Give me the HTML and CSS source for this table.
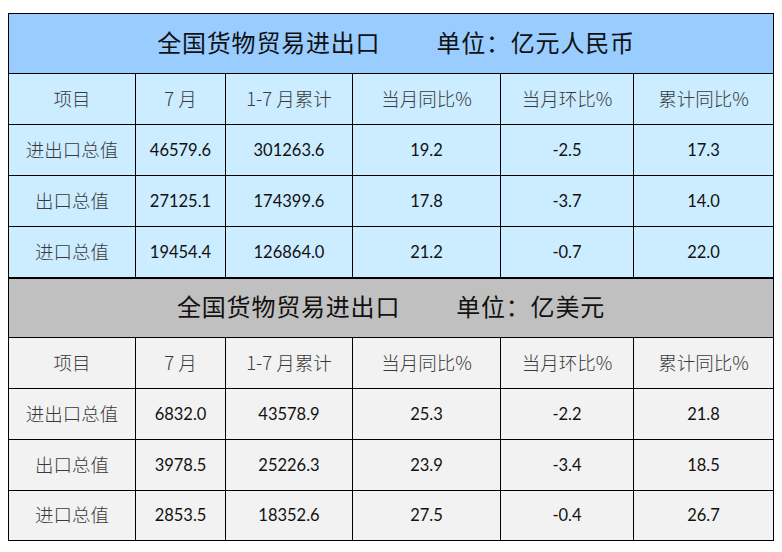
FILE: index.html
```html
<!DOCTYPE html>
<html lang="zh-CN">
<head>
<meta charset="utf-8">
<title>全国货物贸易进出口</title>
<link rel="stylesheet" href="styles.css">
</head>
<body>
<div class="sheet">
  <section class="block block-cny">
    <div class="title"><span>全国货物贸易进出口</span><span>单位：亿元人民币</span></div>
    <div class="cell hd">项目</div>
    <div class="cell hd">7 月</div>
    <div class="cell hd">1-7 月累计</div>
    <div class="cell hd">当月同比%</div>
    <div class="cell hd">当月环比%</div>
    <div class="cell hd">累计同比%</div>

    <div class="cell lbl">进出口总值</div>
    <div class="cell num">46579.6</div>
    <div class="cell num">301263.6</div>
    <div class="cell num">19.2</div>
    <div class="cell num">-2.5</div>
    <div class="cell num">17.3</div>

    <div class="cell lbl">出口总值</div>
    <div class="cell num">27125.1</div>
    <div class="cell num">174399.6</div>
    <div class="cell num">17.8</div>
    <div class="cell num">-3.7</div>
    <div class="cell num">14.0</div>

    <div class="cell lbl">进口总值</div>
    <div class="cell num">19454.4</div>
    <div class="cell num">126864.0</div>
    <div class="cell num">21.2</div>
    <div class="cell num">-0.7</div>
    <div class="cell num">22.0</div>
  </section>

  <section class="block block-usd">
    <div class="title"><span>全国货物贸易进出口</span><span>单位：亿美元</span></div>
    <div class="cell hd">项目</div>
    <div class="cell hd">7 月</div>
    <div class="cell hd">1-7 月累计</div>
    <div class="cell hd">当月同比%</div>
    <div class="cell hd">当月环比%</div>
    <div class="cell hd">累计同比%</div>

    <div class="cell lbl">进出口总值</div>
    <div class="cell num">6832.0</div>
    <div class="cell num">43578.9</div>
    <div class="cell num">25.3</div>
    <div class="cell num">-2.2</div>
    <div class="cell num">21.8</div>

    <div class="cell lbl">出口总值</div>
    <div class="cell num">3978.5</div>
    <div class="cell num">25226.3</div>
    <div class="cell num">23.9</div>
    <div class="cell num">-3.4</div>
    <div class="cell num">18.5</div>

    <div class="cell lbl">进口总值</div>
    <div class="cell num">2853.5</div>
    <div class="cell num">18352.6</div>
    <div class="cell num">27.5</div>
    <div class="cell num">-0.4</div>
    <div class="cell num">26.7</div>
  </section>
</div>
</body>
</html>
```

FILE: styles.css
```css
html, body {
  margin: 0;
  padding: 0;
  background: #ffffff;
}

body {
  padding: 13px 0 0 8px;
}

.sheet {
  width: 766px;
  display: flex;
  flex-direction: column;
}

.block {
  display: grid;
  grid-template-columns: 126px 89px 126px 147px 132px 139px;
  grid-auto-rows: 50px;
  gap: 1px;
  padding: 1px;
  background: #000000;
}

.block-cny {
  grid-template-rows: 59px repeat(4, 50px);
}

.block-usd {
  grid-template-rows: 58px 50px 50px 50px 49px;
}

.title {
  grid-column: 1 / -1;
  display: flex;
  align-items: center;
  justify-content: center;
  gap: 56px;
  padding: 0 0 5px 10px;
  font-family: "Noto Sans CJK SC", "Noto Sans", sans-serif;
  font-size: 24px;
  letter-spacing: 0.8px;
  color: #111111;
}

.block-usd .title {
  padding-left: 0;
}

.block-cny .title { background: #99ccff; }
.block-cny .cell { background: #ccecff; }
.block-usd .title { background: #c0c0c0; }
.block-usd .cell { background: #f2f2f2; }

.cell {
  display: flex;
  align-items: center;
  justify-content: center;
  white-space: nowrap;
}

.hd, .lbl {
  font-family: "Noto Sans CJK SC", "Noto Sans", sans-serif;
  font-weight: 300;
  font-size: 18.5px;
  color: #3a3a3a;
  padding-bottom: 3px;
}

.num {
  font-family: Lato, "Liberation Sans", sans-serif;
  font-size: 16.5px;
  color: #111111;
  padding-bottom: 1px;
}
```
